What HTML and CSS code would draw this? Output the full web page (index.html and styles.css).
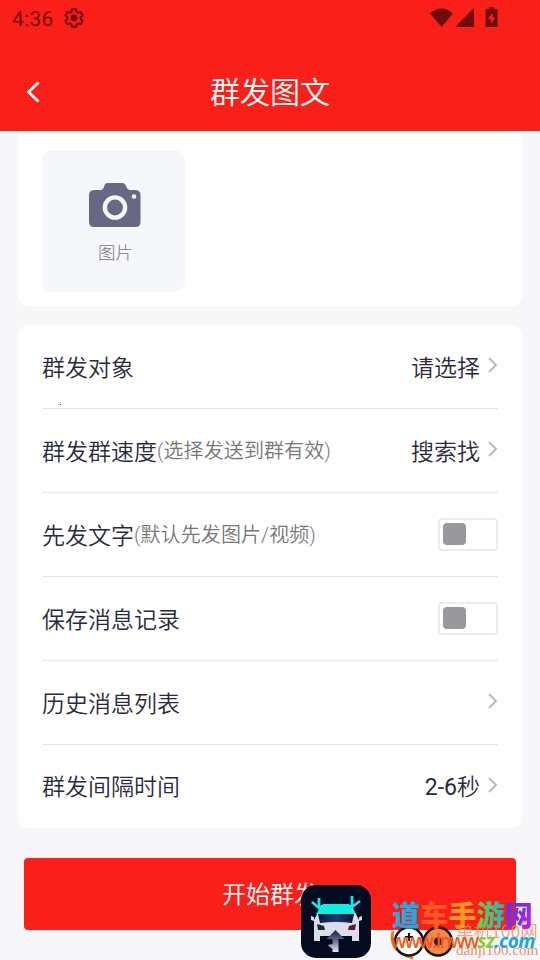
FILE: index.html
```html
<!DOCTYPE html>
<html lang="zh-CN">
<head>
<meta charset="utf-8">
<title>群发图文</title>
<link rel="stylesheet" href="styles.css">
</head>
<body>
<div class="screen">
  <header class="header">
    <div class="status">
      <span class="clock">4:36</span>
      <svg class="gear" width="22" height="22" viewBox="0 0 24 24"><path d="M9.8 2.500h4.400l.6 2.800 1.700 1 2.700-.9 2.200 3.800-2.100 1.900v1.900l2.100 1.900-2.200 3.800-2.700-.9-1.700 1-.6 2.800H9.800l-.6-2.800-1.700-1-2.700.9-2.200-3.800 2.100-1.900v-1.900L2.600 9.200l2.200-3.800 2.700.9 1.700-1z" fill="none" stroke="currentColor" stroke-width="2.300" stroke-linejoin="round"/><circle cx="12" cy="12" r="3.800" fill="currentColor"/></svg>
      <svg class="signals" width="68" height="22" viewBox="0 0 68 22"><path d="M0 5.500Q11.500-4.500 23 5.500L11.500 19z"/><path d="M44 0v19H25z"/><path d="M59-.7h5V1h2.500q1 0 1 1v16q0 1-1 1h-10q-1 0-1-1V2q0-1 1-1H59z"/><path class="bolt" d="M62.500 4.500L58 11h3v5l4-6.500h-2.500z"/></svg>
    </div>
    <div class="nav">
      <svg class="back" width="14" height="22" viewBox="0 0 14 22"><path d="M12.500 1.500L2.500 11l10 9.500"/></svg>
      <h1>群发图文</h1>
    </div>
  </header>
  <main>
    <section class="card media">
      <div class="upload">
        <svg width="52" height="46" viewBox="0 0 52 46"><path fill="#686885" d="M6 7h6q2 0 3-3l.5-2q1-2 3-2h15q2 0 3 2l1 2q1 3 3 3h5q6 0 6 5v27q0 5-5 5H5q-5 0-5-5V12q0-5 6-5z"/><circle cx="26" cy="24.500" r="10.100" fill="none" stroke="#f5f7fb" stroke-width="4.400"/><circle cx="45" cy="13.500" r="2.300" fill="#f5f7fb"/></svg>
        <span>图片</span>
      </div>
    </section>
    <section class="card list">
      <div class="row"><span>群发对象</span><span class="value">请选择</span><svg class="chev" viewBox="0 0 10 16"><path d="M1 1l7 7-7 7"/></svg><i class="speck"></i></div>
      <div class="row"><span>群发群速度</span><small>(选择发送到群有效)</small><span class="value">搜索找</span><svg class="chev" viewBox="0 0 10 16"><path d="M1 1l7 7-7 7"/></svg></div>
      <div class="row"><span>先发文字</span><small>(默认先发图片/视频)</small><span class="switch"><i></i></span></div>
      <div class="row"><span>保存消息记录</span><span class="switch"><i></i></span></div>
      <div class="row"><span>历史消息列表</span><span class="value"></span><svg class="chev" viewBox="0 0 10 16"><path d="M1 1l7 7-7 7"/></svg></div>
      <div class="row"><span>群发间隔时间</span><span class="value"><span class="num">2-6</span>秒</span><svg class="chev" viewBox="0 0 10 16"><path d="M1 1l7 7-7 7"/></svg></div>
    </section>
    <div class="submit">开始群发</div>
  </main>
  <svg class="app" width="70" height="73" viewBox="0 0 70 73">
    <defs><linearGradient id="glass" x1="0" x2="1"><stop offset="0" stop-color="#071a3c"/><stop offset=".5" stop-color="#223b70"/><stop offset="1" stop-color="#071534"/></linearGradient><linearGradient id="arrow" x1="0" x2="0" y1="0" y2="1"><stop offset="0" stop-color="#18254f"/><stop offset=".45" stop-color="#5c6488"/><stop offset="1" stop-color="#e8eaf5"/></linearGradient></defs>
    <rect width="70" height="73" rx="15" fill="#040b20"/>
    <path d="M20 20h30l5 9 3 6v21h-7v-5H19v5h-6V35l3-6z" fill="#dcddec"/>
    <path d="M22 19h26l7 10H15z" fill="#10eee4"/>
    <path d="M17 29h36l-2 9q-16-2-32 0z" fill="url(#glass)"/>
    <path d="M10 31l3 1v4l-3-1zM61 31l-3 1v4l3-1z" fill="#dcddec"/>
    <path d="M16 39l7 2 1 4h-7z" fill="#152b38"/><path d="M55 39l-7 2-1 4h7z" fill="#641b29"/>
    <path d="M34.500 45l9 9h-6v13h-6v-3l-5-4 5-1v-5h-6z" fill="url(#arrow)"/>
    <path d="M18 13v10l-7-6M51 11v11l8-6" fill="none" stroke="#16e5e7" stroke-width="2.800"/>
  </svg>
  <div class="mark">
    <svg class="rings" width="75" height="40" viewBox="0 0 75 40"><path d="M3 8q-5 20 20 27" fill="none" stroke="#e98228" stroke-width="3"/><circle cx="19" cy="18.500" r="14" fill="#fff" stroke="#171311" stroke-width="2.500"/><circle cx="48" cy="18.500" r="14" fill="#f8864a" stroke="#171311" stroke-width="2.500"/><path d="M19 10v8M15 14h8" stroke="#171311" stroke-width="2"/><circle cx="48" cy="18.500" r="4" fill="#3a1b10"/></svg>
    <div class="site">单机100网</div>
    <div class="domain">danji100.com</div>
    <div class="brand"><b>道</b><b>车</b><b>手</b><b>游</b><b>网</b></div>
    <div class="url"><span>www.lnww</span><em>sz</em><em>.com</em></div>
  </div>
</div>
</body>
</html>
```
FILE: styles.css
```css
* { box-sizing: border-box; }
body { margin: 0; background: #f7f7fa; font-family: Roboto, "Noto Sans CJK SC", sans-serif; font-weight: 350; color: #292a3e; }
.screen { position: relative; width: 540px; height: 960px; overflow: hidden; }
.header { height: 131px; background: #fa2019; }
.status { height: 54px; padding: 7px 42px 0 12px; display: flex; align-items: flex-start; color: #780b08; }
.clock { font: 400 21px/24px Roboto, sans-serif; letter-spacing: .3px; }
.gear { margin: 0 0 0 9px; }
.signals { margin-left: auto; margin-top: 1px; fill: #6f0b08; overflow: visible; }
.signals .bolt { fill: #fa2019; }
.nav { height: 76px; display: grid; grid-template-columns: 40px 1fr 40px; align-items: center; }
.back { margin: -1px 0 0 26px; }
.back path { fill: none; stroke: #fff; stroke-width: 2.8; }
h1 { margin: 0; padding-top: 2px; text-align: center; color: #fff; font-size: 30px; line-height: 44px; font-weight: 350; }
main { padding: 0 18px; }
.card { background: #fff; }
.media { height: 175px; padding: 19px 24px; border-radius: 0 0 10px 10px; }
.upload { width: 143px; height: 142px; border-radius: 11px; background: #f5f7fb; display: flex; flex-direction: column; align-items: center; padding: 33px 0 0 2px; }
.upload span { margin: 11px 0 0 2px; font-size: 17.5px; line-height: 26px; color: #777; font-weight: 300; }
.list { margin-top: 19px; padding: 0 24px; height: 503px; border-radius: 10px; }
.row { position: relative; height: 84px; padding-bottom: 2px; border-bottom: 1px solid #e6e6e8; display: flex; align-items: center; font-size: 23px; white-space: nowrap; }
.row:last-child { border: 0; padding-bottom: 4px; }
small { font-size: 20px; color: #777; letter-spacing: .1px; }
.value { margin-left: auto; }
.num { font-weight: 400; }
.chev { width: 10px; height: 16px; margin: -1px 0 0 8px; }
.chev path { fill: none; stroke: #b9b9bc; stroke-width: 1.9; }
.switch { margin: 2px 0 0 auto; width: 60px; height: 33px; padding: 3px; border: 2px solid #ebebed; border-radius: 4px; }
.switch i { display: block; width: 23px; height: 22px; background: #99999b; border-radius: 4px; }
.speck { position: absolute; left: 18px; top: 79px; width: 1px; height: 1px; background: #333; }
.submit { margin: 30px 6px 0; height: 72px; border-radius: 4px; background: #fa2019; color: #fff; font-size: 24px; line-height: 75px; text-align: center; }
.app { position: absolute; left: 301px; top: 885px; }
.mark { position: absolute; left: 388px; top: 897px; width: 152px; height: 63px; white-space: nowrap; }
.rings { position: absolute; left: 2px; top: 26px; }
.brand { position: absolute; left: 4px; top: 1px; font-size: 28px; line-height: 38px; font-weight: 700; display: flex; }
.brand b { width: 28.2px; color: #20a9e7; }
.brand b:nth-child(2) { color: #ff5924; }
.brand b:nth-child(3) { color: #ff9822; }
.brand b:nth-child(4) { color: transparent; background: linear-gradient(90deg, #6bd344, #20b8bd); background-clip: text; }
.brand b:nth-child(5) { color: transparent; background: linear-gradient(120deg, #4537ef, #ca23d3); background-clip: text; }
.url { position: absolute; left: 3px; top: 30px; font: 600 19px/28px "Open Sans", sans-serif; letter-spacing: -1.7px; color: #ee5a20; }
.url em { color: #82cf37; font-weight: 700; letter-spacing: -.5px; }
.url em + em { color: #1ca3e2; }
.site { position: absolute; left: 68px; top: 22px; font: 17.5px/24px "Noto Sans CJK SC", sans-serif; color: #ed8b59; opacity: .75; }
.domain { position: absolute; left: 68px; top: 44px; font: 15px/18px "Liberation Serif", serif; color: #ed8255; opacity: .9; }
```
